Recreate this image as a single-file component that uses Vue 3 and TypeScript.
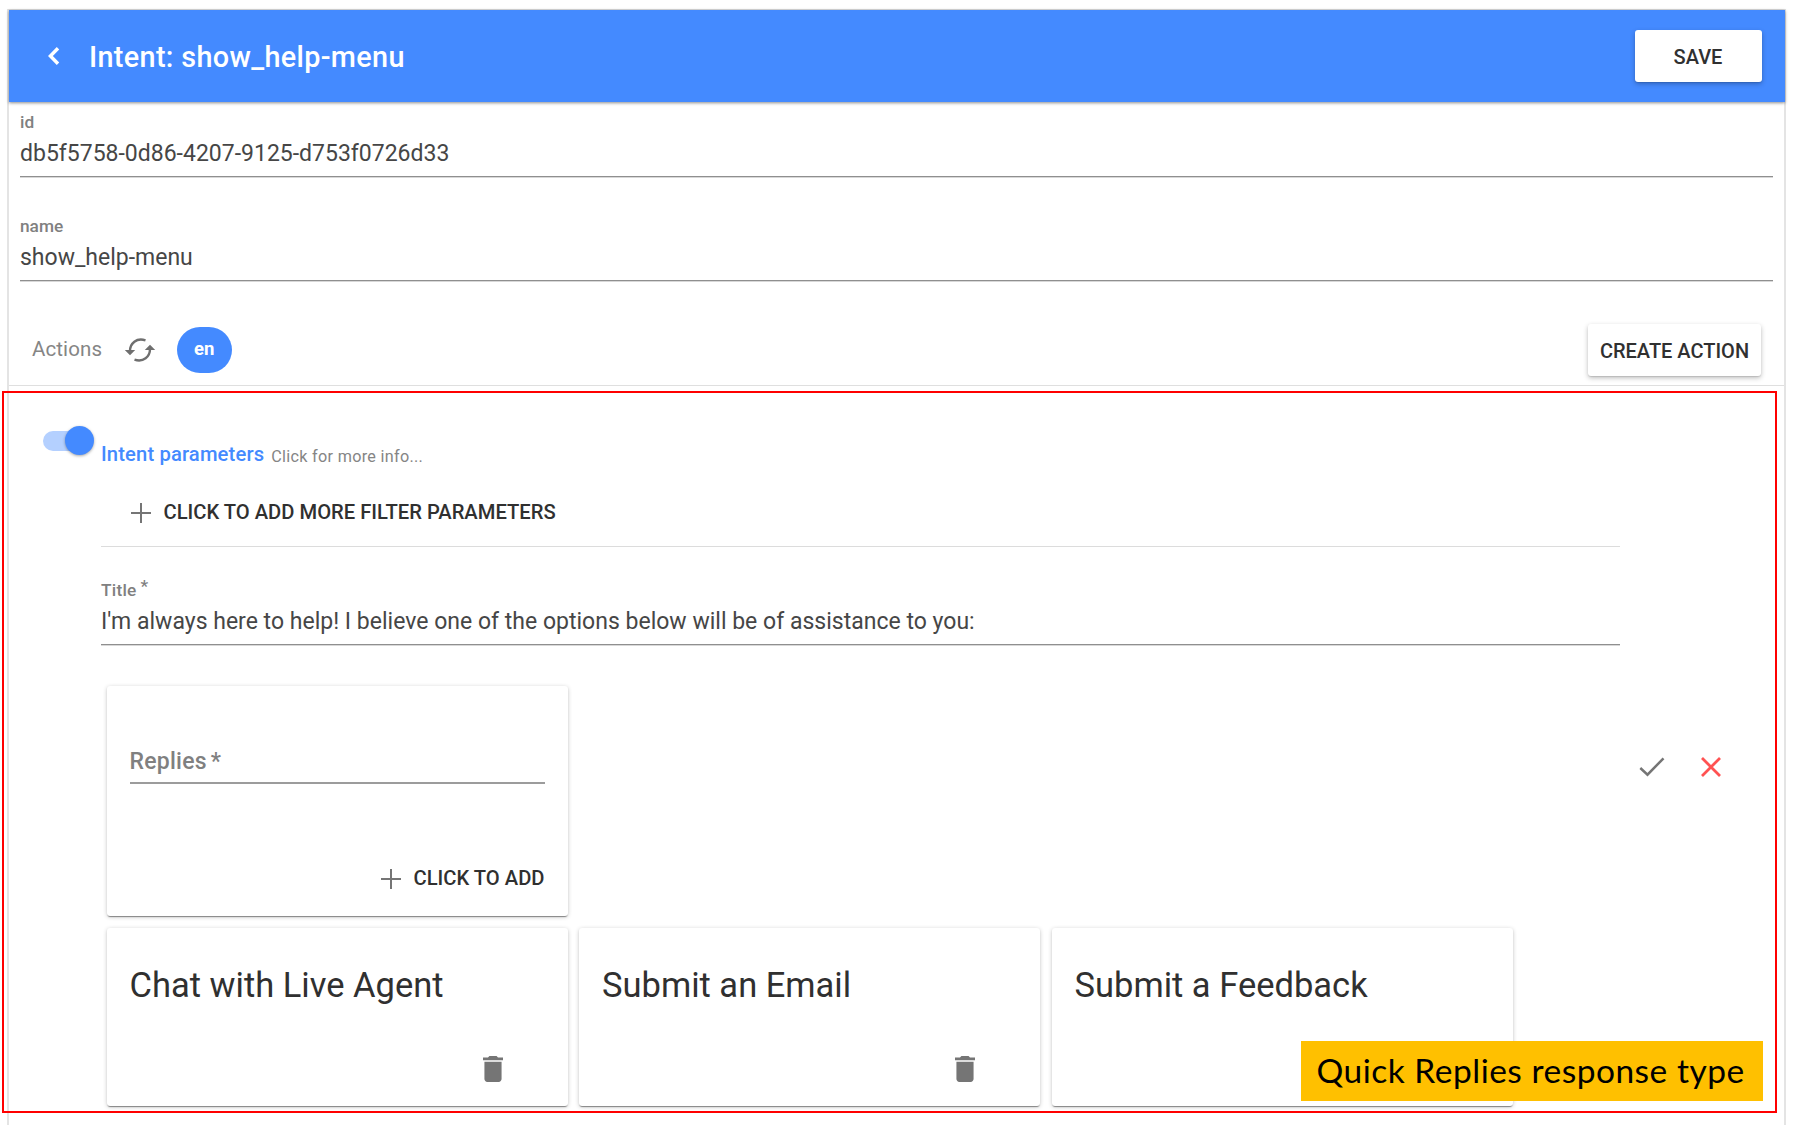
<script setup lang="ts">
import { ref } from 'vue'

interface Field {
  label: string
  value: string
}

const fields: Field[] = [
  { label: 'id', value: 'db5f5758-0d86-4207-9125-d753f0726d33' },
  { label: 'name', value: 'show_help-menu' },
]

const replies = ref<string[]>(['Chat with Live Agent', 'Submit an Email', 'Submit a Feedback'])
</script>

<template>
  <div class="page">
    <div class="panel">
      <header class="toolbar">
        <svg class="back" width="14" height="20" viewBox="0 0 14 20">
          <path d="M11 2.2 L3.4 10 L11 17.8" fill="none" stroke="#fff" stroke-width="3.4" />
        </svg>
        <h1 class="heading">Intent: show_help-menu</h1>
        <button class="raised save">SAVE</button>
      </header>

      <section class="fields">
        <div v-for="f in fields" :key="f.label" class="field">
          <label class="label">{{ f.label }}</label>
          <div class="value">{{ f.value }}</div>
        </div>
      </section>

      <div class="actions">
        <span class="actions-title">Actions</span>
        <svg class="refresh" width="32" height="28" viewBox="0 0 32 28">
          <g fill="none" stroke="#6f6f6f" stroke-width="2.4">
            <path d="M6 15 C6 7.500 12.500 1.400 21.500 4.400" />
            <path d="M26 13 C26 20.500 19.500 26.600 10.500 23.600" />
          </g>
          <path d="M0.800 14 H11.200 L6 19.300 Z M20.800 14 H31.200 L26 8.700 Z" fill="#6f6f6f" />
        </svg>
        <span class="lang">en</span>
        <button class="raised create">CREATE ACTION</button>
      </div>

      <div class="item">
        <div class="switch"><span class="track"></span><span class="thumb"></span></div>

        <div class="main">
          <div class="params">
            <span class="params-title">Intent parameters</span>
            <span class="params-info">Click for more info...</span>
          </div>
          <div class="add-filter">
            <svg width="20" height="20" viewBox="0 0 20 20"><path d="M10 0V20M0 10H20" stroke="#757575" stroke-width="2" /></svg>
            <span class="btn-text filter-text">CLICK TO ADD MORE FILTER PARAMETERS</span>
          </div>
          <div class="field title-field">
            <label class="label title-label">Title<span class="star">*</span></label>
            <div class="value sentence">I'm always here to help! I believe one of the options below will be of assistance to you:</div>
          </div>

          <div class="cards">
            <div class="card form-card">
              <div class="reply-input">Replies<span class="big-star">*</span></div>
              <div class="add-reply">
                <svg width="20" height="20" viewBox="0 0 20 20"><path d="M10 0V20M0 10H20" stroke="#757575" stroke-width="2" /></svg>
                <span class="btn-text">CLICK TO ADD</span>
              </div>
            </div>
            <div v-for="r in replies" :key="r" class="card reply-card">
              <div class="reply-text">{{ r }}</div>
              <svg class="trash" width="20" height="26" viewBox="5 3 14 18" preserveAspectRatio="none">
                <path d="M6 19c0 1.1.9 2 2 2h8c1.100 0 2-.9 2-2V7H6v12zM19 4h-3.500l-1-1h-5l-1 1H5v2h14V4z" fill="#757575" />
              </svg>
            </div>
          </div>
        </div>

        <div class="confirm">
          <svg width="26" height="20" viewBox="0 0 26 20"><path d="M1.300 11 L8.500 17.700 L24.500 1.300" fill="none" stroke="#757575" stroke-width="2.500" /></svg>
          <svg width="20" height="20" viewBox="0 0 20 20"><path d="M1 1L19 19M19 1L1 19" stroke="#ff5252" stroke-width="2.800" /></svg>
        </div>
      </div>
    </div>

    <div class="outline"></div>
    <div class="callout">Quick Replies response type</div>
  </div>
</template>

<style>
body {
  margin: 0;
  background: #fff;
}
</style>

<style scoped>
.page {
  position: relative;
  box-sizing: border-box;
  width: 1793px;
  height: 1125px;
  padding: 9px 7px 0;
  overflow: hidden;
  background: #fff;
  color: #212121;
  font-family: Roboto, "Liberation Sans", sans-serif;
}
.panel {
  border: 2px solid #e4e4e4;
  border-top: 1px solid #dcdcdc;
  border-bottom: 0;
}
.toolbar {
  display: flex;
  align-items: center;
  height: 92px;
  margin: 0 -0.5px;
  background: #448aff;
  box-shadow: 0 1px 3px rgba(0, 0, 0, 0.45);
}
.back {
  margin: 0 0 0 38.5px;
}
.heading {
  margin: 1px 0 0 28px;
  color: #fff;
  font-size: 28.8px;
  font-weight: 500;
  letter-spacing: 0.34px;
  line-height: 40px;
  white-space: nowrap;
}
.raised {
  height: 52px;
  margin: 0 23px 0 auto;
  padding: 1px 0 0;
  border: 0;
  border-radius: 3px;
  background: #fff;
  color: #303030;
  box-shadow: 0 2px 5px rgba(0, 0, 0, 0.26), 0 1px 1px rgba(0, 0, 0, 0.1);
  font-family: inherit;
  font-size: 20px;
  font-weight: 500;
  white-space: nowrap;
}
.save {
  width: 127px;
}
.create {
  width: 173px;
}
.fields {
  padding: 8px 11px 0 11px;
}
.field {
  border-bottom: 1px solid #8f8f8f;
  box-shadow: 0 1px #d8d8d8;
}
.field + .field {
  margin-top: 37px;
}
.label {
  display: block;
  height: 24px;
  margin-bottom: 4px;
  color: #808080;
  font-size: 17.3px;
  font-weight: 500;
  line-height: 24px;
}
.title-label {
  letter-spacing: 0.25px;
}
.value {
  height: 32px;
  padding-bottom: 6px;
  color: #464646;
  font-size: 23px;
  line-height: 32px;
  white-space: nowrap;
}
.sentence {
  letter-spacing: 0.01px;
}
.star {
  position: relative;
  top: -4px;
  margin-left: 4px;
}
.actions {
  display: flex;
  align-items: center;
  height: 70px;
  margin-top: 34px;
  border-bottom: 1px solid #dfdfdf;
}
.actions-title {
  margin-left: 23px;
  color: #858585;
  font-size: 20.5px;
  letter-spacing: 0.1px;
  line-height: 28px;
  margin-bottom: 3px;
}
.refresh {
  margin-left: 21.5px;
}
.lang {
  box-sizing: border-box;
  width: 55px;
  height: 46px;
  margin-left: 21px;
  border-radius: 23px;
  background: #448aff;
  color: #fff;
  font-size: 18.5px;
  font-weight: 700;
  line-height: 45px;
  text-align: center;
}
.item {
  display: flex;
  height: 761px;
}
.switch {
  position: relative;
  width: 52px;
  height: 30px;
  margin: 40px 0 0 34px;
}
.track {
  display: block;
  width: 49px;
  height: 20px;
  margin-top: 5px;
  border-radius: 10px;
  background: #b4d0ff;
}
.thumb {
  position: absolute;
  top: 0;
  left: 21.5px;
  width: 29px;
  height: 29px;
  border-radius: 50%;
  background: #448aff;
  box-shadow: 0 1px 3px rgba(0, 0, 0, 0.35);
}
.main {
  width: 1519px;
  margin-left: 6px;
  padding-top: 54px;
}
.params {
  display: flex;
  height: 28px;
  line-height: 28px;
  white-space: nowrap;
}
.params-title {
  color: #448aff;
  font-size: 20.2px;
  font-weight: 500;
  letter-spacing: 0.14px;
}
.params-info {
  margin: 3px 0 0 7px;
  color: #858585;
  font-size: 16.2px;
  letter-spacing: 0.3px;
}
.add-filter {
  display: flex;
  align-items: center;
  height: 28px;
  margin-top: 31px;
  padding: 0 0 19px 30px;
  border-bottom: 1px solid #dcdcdc;
}
.btn-text {
  margin-left: 12.5px;
  margin-bottom: 3px;
  color: #303030;
  font-size: 20.2px;
  font-weight: 500;
  line-height: 28px;
  white-space: nowrap;
}
.title-field {
  margin-top: 31px;
}
.cards {
  display: grid;
  grid-template-columns: repeat(3, 461px);
  column-gap: 11.5px;
  row-gap: 12px;
  padding: 41px 0 0 5.5px;
}
.card {
  box-sizing: border-box;
  border-radius: 3px;
  background: #fff;
  box-shadow: 0 1px 4px rgba(0, 0, 0, 0.22), 0 2px 1px -1px rgba(0, 0, 0, 0.3), 0 1px 1px rgba(0, 0, 0, 0.14);
}
.form-card {
  grid-column: 1 / -1;
  width: 461px;
  height: 230px;
  padding: 60px 23px 0;
}
.reply-input {
  height: 32px;
  padding-bottom: 4px;
  border-bottom: 2px solid #9c9c9c;
  color: #808080;
  font-size: 23px;
  font-weight: 500;
  letter-spacing: 0.25px;
  line-height: 32px;
}
.big-star {
  margin-left: 4px;
}
.add-reply {
  display: flex;
  align-items: center;
  justify-content: flex-end;
  height: 28px;
  margin-top: 81px;
}
.reply-card {
  display: flex;
  flex-direction: column;
  height: 178px;
  padding: 34px 23px 0;
}
.reply-text {
  color: #303030;
  font-size: 34.5px;
  line-height: 46px;
  white-space: nowrap;
}
.trash {
  margin: 48px 0 0 353px;
}
.confirm {
  display: flex;
  align-items: center;
  margin-left: 19px;
  gap: 36px;
}
.outline {
  position: absolute;
  top: 391px;
  left: 2px;
  box-sizing: border-box;
  width: 1775px;
  height: 722px;
  border: 2px solid #f00;
}
.callout {
  position: absolute;
  top: 1041px;
  left: 1301px;
  box-sizing: border-box;
  width: 462px;
  height: 60px;
  padding-left: 15.5px;
  background: #ffc000;
  color: #000;
  font-family: Lato, "Open Sans", sans-serif;
  font-size: 33.5px;
  letter-spacing: 0.5px;
  line-height: 59px;
  white-space: nowrap;
}
</style>
